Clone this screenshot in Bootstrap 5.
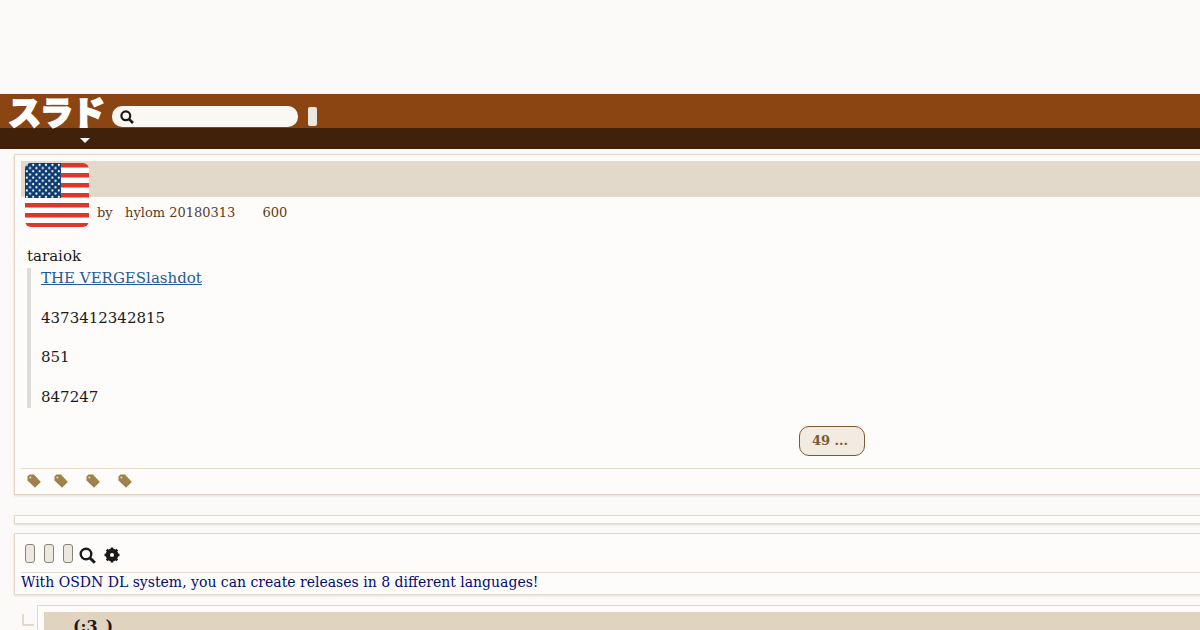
<!DOCTYPE html>
<html lang="ja">
<head>
    <meta charset="UTF-8">
    <meta name="viewport" content="width=device-width, initial-scale=1.0">
    <title>スラド</title>
    <link href="https://cdn.jsdelivr.net/npm/bootstrap@5.3.0/dist/css/bootstrap.min.css" rel="stylesheet">
    <style>
        html, body { height: 630px; overflow: hidden; }
        body { background: #fbfaf8; font-family: "DejaVu Serif", "Noto Sans CJK JP", serif; font-size: 15px; line-height: 20px; color: #1a1a1a; }
        .page-wide { width: 1660px; }
        .top-gap { height: 94px; }
        .site-head { height: 34px; background: #8b4513; padding-left: 8px; }
        .site-logo { width: 97px; font-family: "Noto Sans CJK JP", sans-serif; font-weight: 900; font-size: 33px; line-height: 34px; letter-spacing: -1px; color: #fff; -webkit-text-stroke: 1.6px #fff; white-space: nowrap; }
        .search-pill { width: 186px; height: 21px; margin: 12px 0 0 7px; padding-left: 8px; background: #fbf8f3; border-radius: 10px; }
        .search-go { width: 9px; height: 19px; margin: 13px 0 0 10px; background: #ece7df; border-radius: 2px; }
        .sub-head { height: 21px; background: #42210b; padding-left: 80px; }
        .caret-down { width: 0; height: 0; margin-top: 10px; border-left: 5.5px solid transparent; border-right: 5.5px solid transparent; border-top: 5px solid #fff; }
        .panel { margin-left: 14px; background: #fefcfa; border: 1px solid #e3d9cb; border-right: 0; box-shadow: 0 1px 2px #e4ddd2; }
        .story { margin-top: 5px; height: 341px; padding: 6px 0 0 6px; }
        .story-title { height: 36px; background: #e3d9cb; }
        .flag-box { float: left; margin: -34px 8px 0 4px; position: relative; }
        .story-meta { height: 30px; padding-top: 6px; font-size: 13px; color: #5c3a1e; white-space: pre; }
        .meta-count { margin-left: 27px; }
        .story-body { clear: both; padding: 0 0 0 6px; }
        .intro-line { margin-top: 19px; line-height: 20px; }
        .story-quote { margin: 2px 0 0 0; padding-left: 10px; border-left: 4px solid #dcdcdc; height: 140px; }
        .story-quote p { margin: 0 0 19.6px; line-height: 20px; }
        .story-quote a { color: #225a96; }
        .more-row { height: 41px; padding-top: 18px; }
        .more-btn { width: 66px; height: 30px; padding-right: 4px; margin-left: 772px; background: #f2ebe2; border: 1px solid #7a5a30; border-radius: 10px; color: #7a5a30; font-weight: 700; font-size: 13px; line-height: 27px; text-align: center; }
        .tag-row { margin-top: 19px; height: 25px; border-top: 1px solid #e3d9cb; padding-left: 6px; }
        .tag-row svg { margin-right: 13px; }
        .tag-row svg:nth-child(n+2) { margin-right: 18px; }
        .thin-panel { margin-top: 20px; height: 9px; }
        .tool-panel { margin-top: 9px; height: 62px; padding-left: 6px; }
        .tool-row { height: 38px; padding: 10px 0 0 4px; }
        .tool-btn { width: 10px; height: 19px; margin-right: 9px; background: #ece7df; border: 1px solid #8a8378; border-radius: 3px; }
        .tool-btn-last { margin-right: 6px; }
        .tool-icon { margin-top: 3px; }
        .osdn-line { border-top: 1px solid #e3d9cb; height: 22px; line-height: 19px; font-size: 14px; color: #000b73; white-space: nowrap; }
        .reply-row { margin: 10px 0 0 22px; }
        .reply-hook { width: 12px; height: 12px; margin-top: 9px; margin-right: 3px; border-left: 2px solid #e3d9cb; border-bottom: 2px solid #e3d9cb; }
        .reply-box { flex: 1; height: 40px; padding: 6px 0 0 6px; background: #fefcfa; border: 1px solid #e3d9cb; border-right: 0; }
        .reply-title { height: 34px; padding-left: 29px; background: #e0d3bf; font-weight: 700; font-size: 16px; line-height: 30px; }
    </style>
</head>
<body>
    <div class="page-wide">
        <div class="top-gap"></div>
        <div class="site-head d-flex">
            <div class="site-logo">スラド</div>
            <div class="search-pill d-flex align-items-center">
                <svg width="14" height="14" viewBox="0 0 14 14"><circle cx="5.8" cy="5.8" r="4.4" fill="none" stroke="#1a1a1a" stroke-width="2.2"/><path d="M8.8 8.8 L13 13" stroke="#1a1a1a" stroke-width="2.6"/></svg>
            </div>
            <div class="search-go"></div>
        </div>
        <div class="sub-head d-flex"><div class="caret-down"></div></div>

        <div class="panel story">
            <div class="story-title"></div>
            <div class="flag-box">
                <svg width="64" height="64" viewBox="0 0 64 64">
                    <defs>
                        <clipPath id="flagClip"><rect width="64" height="64" rx="6"/></clipPath>
                        <pattern id="flagStars" width="6.4" height="6.4" patternUnits="userSpaceOnUse"><circle cx="1.8" cy="1.8" r="1.1" fill="#fff"/><circle cx="5" cy="5" r="1.1" fill="#fff"/></pattern>
                    </defs>
                    <g clip-path="url(#flagClip)">
                        <rect width="64" height="64" fill="#fff"/>
                        <rect y="0" width="64" height="4.5" fill="#e0352b"/>
                        <rect y="10" width="64" height="4.5" fill="#e0352b"/>
                        <rect y="20" width="64" height="4.5" fill="#e0352b"/>
                        <rect y="30" width="64" height="4.5" fill="#e0352b"/>
                        <rect y="40" width="64" height="4.5" fill="#e0352b"/>
                        <rect y="50" width="64" height="4.5" fill="#e0352b"/>
                        <rect y="60" width="64" height="4" fill="#e0352b"/>
                        <rect width="36" height="35" fill="#0c3a70"/>
                        <rect width="36" height="35" fill="url(#flagStars)"/>
                    </g>
                </svg>
            </div>
            <div class="story-meta">by   hylom 20180313<span class="meta-count">600</span></div>
            <div class="story-body">
                <div class="intro-line">taraiok</div>
                <div class="story-quote">
                    <p><a href="#">THE VERGESlashdot</a></p>
                    <p>4373412342815</p>
                    <p>851</p>
                    <p>847247</p>
                </div>
                <div class="more-row"><div class="more-btn">49 ...</div></div>
            </div>
            <div class="tag-row d-flex align-items-center">
                <svg width="14" height="14" viewBox="0 0 14 14"><path d="M0.5 2.5 L2.5 0.5 L7 0.5 L13.8 8 L8 13.8 L0.5 6.5 Z" fill="#a0804e"/><circle cx="3.4" cy="3.4" r="1" fill="#f0e2a0"/></svg>
                <svg width="14" height="14" viewBox="0 0 14 14"><path d="M0.5 2.5 L2.5 0.5 L7 0.5 L13.8 8 L8 13.8 L0.5 6.5 Z" fill="#a0804e"/><circle cx="3.4" cy="3.4" r="1" fill="#f0e2a0"/></svg>
                <svg width="14" height="14" viewBox="0 0 14 14"><path d="M0.5 2.5 L2.5 0.5 L7 0.5 L13.8 8 L8 13.8 L0.5 6.5 Z" fill="#a0804e"/><circle cx="3.4" cy="3.4" r="1" fill="#f0e2a0"/></svg>
                <svg width="14" height="14" viewBox="0 0 14 14"><path d="M0.5 2.5 L2.5 0.5 L7 0.5 L13.8 8 L8 13.8 L0.5 6.5 Z" fill="#a0804e"/><circle cx="3.4" cy="3.4" r="1" fill="#f0e2a0"/></svg>
            </div>
        </div>

        <div class="panel thin-panel"></div>

        <div class="panel tool-panel">
            <div class="tool-row d-flex align-items-start">
                <div class="tool-btn"></div>
                <div class="tool-btn"></div>
                <div class="tool-btn tool-btn-last"></div>
                <svg class="tool-icon me-2" width="17" height="17" viewBox="0 0 17 17"><circle cx="7" cy="7" r="5.3" fill="none" stroke="#1a1a1a" stroke-width="2.4"/><path d="M11 11 L15.8 15.8" stroke="#1a1a1a" stroke-width="3"/></svg>
                <svg class="tool-icon" width="16" height="16" viewBox="0 0 16 16"><circle cx="8" cy="8" r="4.6" fill="none" stroke="#1a1a1a" stroke-width="3.6"/><path d="M8 .5 V15.5 M.5 8 H15.5 M2.7 2.7 L13.3 13.3 M13.3 2.7 L2.7 13.3" stroke="#1a1a1a" stroke-width="2.6"/><circle cx="8" cy="8" r="2" fill="#fefcfa"/></svg>
            </div>
            <div class="osdn-line">With OSDN DL system, you can create releases in 8 different languages!</div>
        </div>

        <div class="reply-row d-flex">
            <div class="reply-hook"></div>
            <div class="reply-box"><div class="reply-title">(:3_)</div></div>
        </div>
    </div>
    <script src="https://cdn.jsdelivr.net/npm/bootstrap@5.3.0/dist/js/bootstrap.bundle.min.js"></script>
</body>
</html>
